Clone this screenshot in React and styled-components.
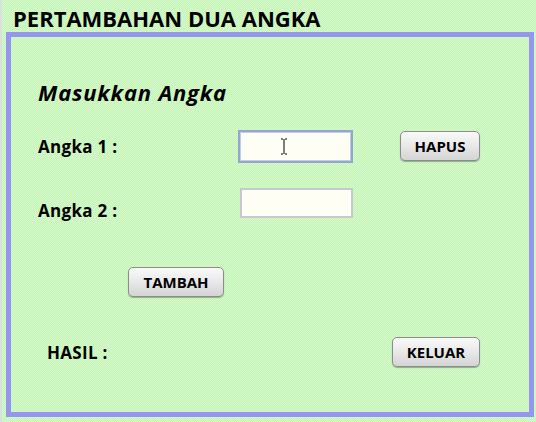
import React from 'react'
import styled, { createGlobalStyle } from 'styled-components'

const Global = createGlobalStyle`
  html, body { margin: 0; padding: 0; }
  body { font-family: "Open Sans", "Noto Sans", sans-serif; }
`

const Frame = styled.div`
  width: 536px;
  height: 422px;
  box-sizing: border-box;
  border-left: 2px solid #d8e0e0;
  background: repeating-conic-gradient(#c6f6ae 0 25%, #d4f8d4 0 50%) 0 0 / 2px 2px;
  display: flex;
  flex-direction: column;
  overflow: hidden;
`

const Title = styled.h1`
  margin: 0;
  height: 32px;
  padding-left: 11px;
  font-size: 22px;
  font-weight: 700;
  line-height: 36px;
  color: #000;
`

const Panel = styled.div`
  margin: 0 2px 5px 4px;
  flex: 1;
  border: 5px solid #9696f0;
  padding: 40px 0 0 27px;
`

const Heading = styled.h2`
  margin: 0;
  height: 30px;
  font-size: 22px;
  font-style: italic;
  font-weight: 700;
  line-height: 30px;
  letter-spacing: 0.8px;
`

const Row = styled.div`
  display: grid;
  grid-template-columns: 200px 154px 88px;
  grid-template-rows: 30px;
  align-items: center;
  height: 30px;
  margin-top: ${p => p.$top}px;
`

const Label = styled.span`
  font-size: 17px;
  font-weight: 700;
  padding-left: ${p => p.$indent || 0}px;
  transform: translateY(${p => p.$drop || 0}px);
  grid-column: ${p => p.$span || 'auto'};
  letter-spacing: 0.3px;
`

const InputBox = styled.div`
  position: relative;
  box-sizing: border-box;
  width: ${p => (p.$focused ? 115 : 113)}px;
  height: ${p => (p.$focused ? 33 : 30)}px;
  margin-left: ${p => (p.$focused ? 0 : 2)}px;
  background: #fefef4;
  border: ${p => (p.$focused ? '2px solid #94a6d0' : '2px solid #c8c8d0')};
  box-shadow: ${p => (p.$focused ? 'inset 0 0 0 1px #c0cce8' : 'none')};
`

const Caret = styled.svg`
  position: absolute;
  left: 40px;
  top: 6px;
`

const Button = styled.button`
  box-sizing: border-box;
  width: ${p => p.$w}px;
  height: 30px;
  margin-left: ${p => p.$left || 0}px;
  justify-self: start;
  border: 1px solid #8c8c8c;
  border-radius: 5px;
  background: linear-gradient(#fafafa, #e8e8e8 50%, #d4d4d4);
  box-shadow: 0 1px 1px rgba(0, 0, 0, 0.3);
  font-family: "Open Sans", "Noto Sans", sans-serif;
  font-size: 15px;
  font-weight: 700;
  color: #000;
  padding: 0;
`

export default function App() {
  return (
    <>
      <Global />
      <Frame>
        <Title>PERTAMBAHAN DUA ANGKA</Title>
        <Panel>
          <Heading>Masukkan Angka</Heading>
          <Row $top={24}>
            <Label>Angka 1 :</Label>
            <InputBox $focused>
              <Caret width="8" height="17" viewBox="0 0 8 17">
                <path d="M1 1h2M5 1h2M4 1v15M1 16h2M5 16h2" stroke="#000" strokeWidth="1" fill="none" />
              </Caret>
            </InputBox>
            <Button $w={80} $left={8}>HAPUS</Button>
          </Row>
          <Row $top={27}>
            <Label $drop={7}>Angka 2 :</Label>
            <InputBox />
          </Row>
          <Row $top={49}>
            <Button $w={96} $left={90}>TAMBAH</Button>
          </Row>
          <Row $top={40}>
            <Label $indent={9} $span="1 / 3">HASIL :</Label>
            <Button $w={88}>KELUAR</Button>
          </Row>
        </Panel>
      </Frame>
    </>
  )
}
